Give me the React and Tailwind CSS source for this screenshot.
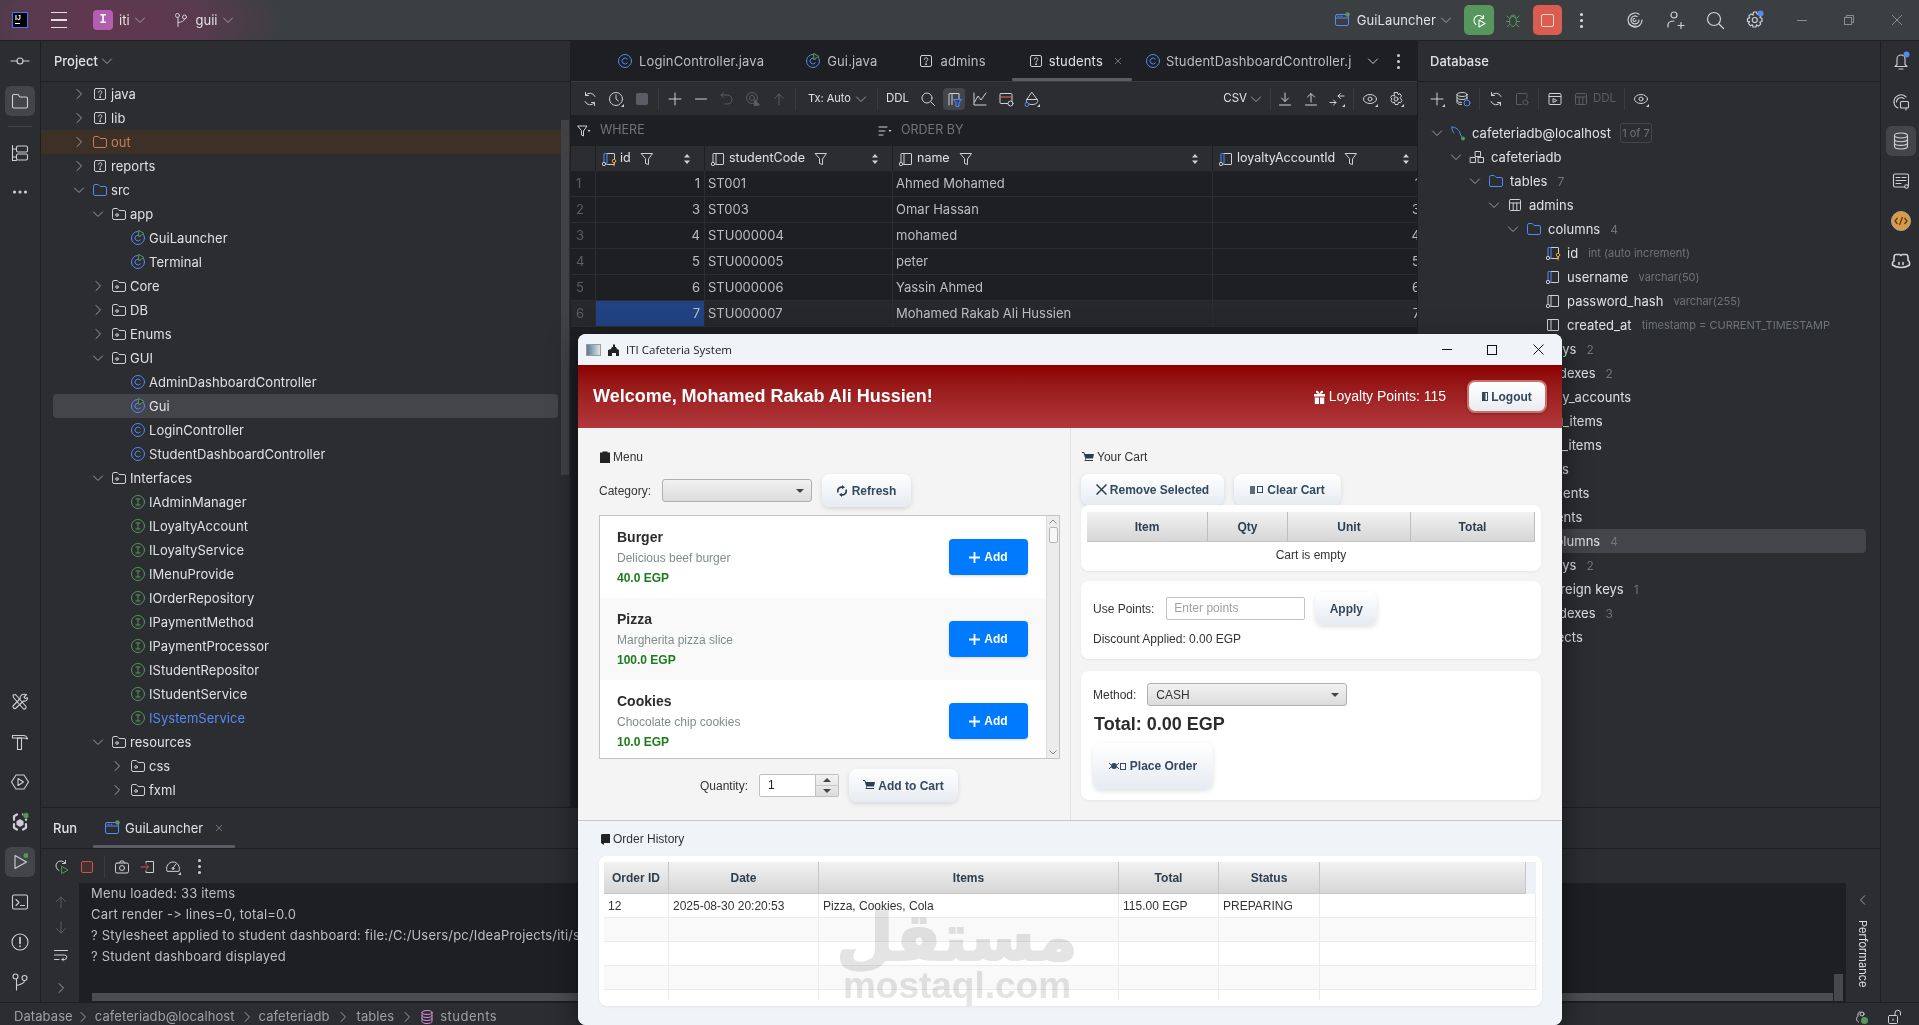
import React from 'react';

const S = ({ s = 16, vb, c = '#ced0d6', w = 1, className = '', children }) => (
  <svg width={s} height={s} viewBox={vb || `0 0 ${s} ${s}`} fill="none" stroke={c} strokeWidth={w} strokeLinecap="round" strokeLinejoin="round" className={`shrink-0 ${className}`}>{children}</svg>
);
const Corner = () => <path d="M16 13v3h-3z" fill="#ced0d6" stroke="none" />;

const ChevR = ({ c = '#9da0a8' }) => <S c={c}><path d="M6 3.5 10.5 8 6 12.5" /></S>;
const ChevD = ({ c = '#9da0a8' }) => <S c={c}><path d="M3.5 6 8 10.5 12.5 6" /></S>;
const folderD = 'M1.5 4A1.5 1.5 0 0 1 3 2.5h3.2l2 2H13A1.5 1.5 0 0 1 14.5 6v6a1.5 1.5 0 0 1-1.5 1.5H3A1.5 1.5 0 0 1 1.5 12z';
const Folder = ({ c = '#548af7' }) => <S c={c}><path d={folderD} /></S>;
const Pkg = () => <S><path d={folderD} /><circle cx="6" cy="9" r="1.3" /></S>;
const Unknown = () => <S><rect x="2.5" y="2.5" width="11" height="11" rx="1.5" /><path d="M6.4 6.3A1.7 1.7 0 1 1 9 7.8c-.6.4-1 .8-1 1.4" /><circle cx="8" cy="11.2" r=".5" fill="#ced0d6" /></S>;
const ClassI = ({ run }) => (
  <S c="#548af7"><circle cx="8" cy="8" r="6.5" /><path d="M10.3 6a3 3 0 1 0 0 4" />{run && <path d="M9 .5 14 3.5 9 6.5z" fill="#2b2d30" stroke="#57965c" />}</S>
);
const Iface = () => <S c="#57965c"><circle cx="8" cy="8" r="6.5" /><path d="M6 5h4M6 11h4M8 5v6" /></S>;
const Table = ({ c = '#ced0d6' }) => <S c={c}><rect x="2.5" y="2.5" width="11" height="11" rx="1" /><path d="M2.5 6h11M6.2 6v7.5M9.8 6v7.5" /></S>;
const Schema = () => <S><rect x="6.5" y="2.5" width="5" height="5" /><rect x="1.5" y="8.5" width="5" height="5" /><rect x="9.5" y="8.5" width="5" height="5" /><path d="M9 7.5v1" /></S>;
const Dolphin = () => <S c="#548af7"><path d="M2 2c4 0 7 3 8 6s1.500 4 3 5" /><path d="M2 2c-.500 3 1 5 2 6" /><circle cx="13" cy="13.500" r="2" fill="#57965c" stroke="none" /></S>;
const Col = ({ c = '#ced0d6', k }) => (
  <S><path d="M6 2.500h7a.5.5 0 0 1 .5.5v10a.5.5 0 0 1-.5.5H6" /><path d="M3 12V3a.5.5 0 0 1 .500-.5H6v11" stroke={c} /><circle cx="3" cy="13" r="1.700" fill="#2b2d30" />{k && <g stroke="#e0a33e"><circle cx="13" cy="10" r="1.700" fill="#2b2d30" /><path d="M13 11.700V15" /></g>}</S>
);
const Plain = () => <S><rect x="2.500" y="2.500" width="11" height="11" rx=".5" /><path d="M6 2.500v11" /></S>;
const Run = () => <S c="#548af7"><rect x="1.500" y="2.500" width="13" height="11" rx="1.500" /><path d="M1.500 6h13" /><path d="M4 4.300h1M7 4.300h1" /><circle cx="13.500" cy="2.500" r="2.300" fill="#57965c" stroke="none" /></S>;

const TreeRow = ({ d, base = 30, gap = 3, chev, icon, text, tc = '#dfe1e5', cnt, meta, badge, bg = '' }) => (
  <div className={`h-6 flex items-center whitespace-nowrap ${bg}`} style={{ paddingLeft: base + d * 19 }}>
    <span className="w-4 mr-[5px] shrink-0">{chev === 'r' ? <ChevR /> : chev === 'd' ? <ChevD /> : null}</span>
    {icon}
    <span className="pt-px tracking-[0.04px]" style={{ marginLeft: gap, color: tc }}>{text}</span>
    {cnt != null && <span className="ml-[10px] pt-px text-[12px] text-[#6f737a]">{cnt}</span>}
    {meta && <span className="ml-[10px] pt-px text-[11px] text-[#6f737a]">{meta}</span>}
    {badge && <span className="ml-[9px] h-[20px] w-[32px] border border-[#43454a] rounded-[3px] text-[11px] text-[#6f737a] flex items-center justify-center">{badge}</span>}
  </div>
);

const projectRows = [
  [0, 'r', <Unknown />, 'java'], [0, 'r', <Unknown />, 'lib'], [0, 'r', <Folder c="#c77d55" />, 'out', '#c77d55', 'bg-[#3d3026]'],
  [0, 'r', <Unknown />, 'reports'], [0, 'd', <Folder />, 'src'], [1, 'd', <Pkg />, 'app'],
  [2, '', <ClassI run />, 'GuiLauncher'], [2, '', <ClassI run />, 'Terminal'], [1, 'r', <Pkg />, 'Core'], [1, 'r', <Pkg />, 'DB'], [1, 'r', <Pkg />, 'Enums'],
  [1, 'd', <Pkg />, 'GUI'], [2, '', <ClassI />, 'AdminDashboardController'], [2, '', <ClassI run />, 'Gui', '#dfe1e5', 'sel'], [2, '', <ClassI />, 'LoginController'], [2, '', <ClassI />, 'StudentDashboardController'],
  [1, 'd', <Pkg />, 'Interfaces'], [2, '', <Iface />, 'IAdminManager'], [2, '', <Iface />, 'ILoyaltyAccount'], [2, '', <Iface />, 'ILoyaltyService'], [2, '', <Iface />, 'IMenuProvide'], [2, '', <Iface />, 'IOrderRepository'],
  [2, '', <Iface />, 'IPaymentMethod'], [2, '', <Iface />, 'IPaymentProcessor'], [2, '', <Iface />, 'IStudentRepositor'], [2, '', <Iface />, 'IStudentService'], [2, '', <Iface />, 'ISystemService', '#548af7'],
  [1, 'd', <Pkg />, 'resources'], [2, 'r', <Pkg />, 'css'], [2, 'r', <Pkg />, 'fxml'],
];

const StripeBtn = ({ active, children }) => (
  <div className={`w-[30px] h-[30px] rounded-[6px] flex items-center justify-center ${active ? 'bg-[#43454a]' : ''}`}>{children}</div>
);

const I20 = ({ children, c = '#ced0d6' }) => <S s={20} c={c} w={1.1}>{children}</S>;
const GreenDot = ({ cx = 16, cy = 4 }) => <circle cx={cx} cy={cy} r="3" fill="#57965c" stroke="#2b2d30" strokeWidth=".6" />;

const LeftStripe = () => (
  <div className="w-[41px] shrink-0 border-r border-[#1e1f22] flex flex-col items-center justify-between">
    <div className="flex flex-col items-center">
      <div className="h-[40px] flex items-center"><I20><circle cx="10" cy="10" r="3" /><path d="M1 10h6M13 10h6" /></I20></div>
      <div className="mt-[5px]"><StripeBtn active><I20><path d="M2.500 5A1.500 1.500 0 0 1 4 3.500h4l2 2.500h6A1.500 1.500 0 0 1 17.500 7.500v8a1.500 1.500 0 0 1-1.500 1.500H4A1.500 1.500 0 0 1 2.500 15.500z" /></I20></StripeBtn></div>
      <div className="w-[24px] h-px bg-[#43454a] my-[10px]" />
      <div className="h-[31px] flex items-center"><I20><rect x="6.500" y="3" width="11" height="6" rx="1.500" /><rect x="6.500" y="11" width="11" height="6" rx="1.500" /><path d="M2.500 2.500v15M2.500 6h4M2.500 14h4M2.500 17.500h4" /></I20></div>
      <div className="h-[40px] flex items-center mt-[4px]"><I20><circle cx="4.500" cy="10" r="1" fill="#ced0d6" /><circle cx="10" cy="10" r="1" fill="#ced0d6" /><circle cx="15.500" cy="10" r="1" fill="#ced0d6" /></I20></div>
    </div>
    <div className="flex flex-col items-center gap-[10px] mb-[5px]">
      <StripeBtn><I20><path d="M3 3 5.500 2.500 16 14.500a2 2 0 0 1-2.500 2.500L3.500 5.500z" /><path d="M16.500 2.500 14 5l1 1.500 2.500-.8c.3 2-1.500 4-4 3.300L5.500 16.500a2 2 0 0 1-2.500-2.500l7.200-7.500C9.500 4 12 2 14.500 2.200z" /></I20></StripeBtn>
      <StripeBtn><I20><path d="M2.500 3.500h11c2 0 3.500 1.500 4 3.500-1.500-.8-3-1-4.500-1H2.500z" /><path d="M7.500 6h4v11.500h-4z" /></I20></StripeBtn>
      <StripeBtn><I20><path d="M6 3h8l4.500 7-4.500 7H6l-4.500-7z" /><path d="M8 6.500 13.500 10 8 13.500z" /></I20></StripeBtn>
      <StripeBtn><I20><path d="M7 2.500 4 4.200v3.600M13 2.500l3 1.700v3.600M4 12v3.800l3 1.700M16 12v3.800l-3 1.700" strokeWidth="2.200" /><path d="M7 9.500l3-1.700 3 1.700v3l-3 1.700-3-1.700z" fill="#ced0d6" /><GreenDot cx="16" cy="3.500" /></I20></StripeBtn>
      <StripeBtn active><I20><path d="M5 3.500 16.500 10 5 16.500z" /><GreenDot cx="16" cy="3.500" /></I20></StripeBtn>
      <StripeBtn><I20><rect x="2.500" y="3" width="15" height="14" rx="1.500" /><path d="M6 7.500 9 10.500 6 13.500M10.500 13.500h4" /></I20></StripeBtn>
      <StripeBtn><I20><circle cx="10" cy="10" r="8" /><path d="M10 5.500v6M10 14v.3" strokeWidth="1.700" /></I20></StripeBtn>
      <StripeBtn><I20><circle cx="5.500" cy="4.500" r="2.500" /><circle cx="14.500" cy="6" r="2.500" /><path d="M6.500 7v11M14.500 8.500c0 3-3 4-8 5" /></I20></StripeBtn>
    </div>
  </div>
);

const RightStripe = () => (
  <div className="w-[39px] shrink-0 border-l border-[#1e1f22] flex flex-col items-center pt-[4px] pl-[1px]">
    <div className="h-[30px] mt-[1px] flex items-center"><I20><path d="M6 13.500V8a4 4 0 0 1 8 0v5.500l2 2H4z" /><path d="M8 18h4" /><circle cx="15.500" cy="3.500" r="3" fill="#548af7" stroke="none" /></I20></div>
    <div className="h-[30px] mt-[11px] flex items-center"><I20><path d="M3 10a7 7 0 0 1 12-5" /><path d="M5.500 10a4.500 4.500 0 0 1 7.500-3.300" /><path d="M3 10c0 3 1.500 5 4 6" /><rect x="9.500" y="9.500" width="8" height="6.500" rx="1" /><path d="M15 16v2" /></I20></div>
    <div className="mt-[9px]"><StripeBtn active><I20><ellipse cx="10" cy="4.500" rx="6.500" ry="2.500" /><path d="M3.500 4.500v11c0 1.400 3 2.500 6.500 2.500s6.500-1.100 6.500-2.500v-11M3.500 8.200c0 1.400 3 2.500 6.500 2.500s6.500-1.100 6.500-2.500M3.500 11.900c0 1.400 3 2.500 6.500 2.500s6.500-1.100 6.500-2.500" /></I20></StripeBtn></div>
    <div className="h-[30px] mt-[10px] flex items-center"><I20><rect x="2.500" y="3" width="15" height="13" rx="1.500" /><path d="M5 6.500h4M11 6.500h4M5 9.500h10M5 12.500h5" /><circle cx="15.500" cy="15.500" r="1.800" fill="#2b2d30" /></I20></div>
    <div className="h-[30px] mt-[10px] flex items-center"><svg width="20" height="20" viewBox="0 0 20 20" fill="none"><circle cx="10" cy="10" r="9.500" fill="#d89a45" stroke="#a8a8a8" /><path d="M6.500 7 4 10l2.500 3M13.500 7 16 10l-2.500 3M11.500 6 8.500 14" stroke="#5a3c12" strokeWidth="1.300" /></svg></div>
    <div className="h-[30px] mt-[10px] flex items-center"><I20><path d="M5 3.500h3.500a2 2 0 0 1 1.500 1 2 2 0 0 1 1.500-1H15c1.500 0 2 1.500 2 3v3c1 .5 1.500 1 1.500 2v2.500c-2 1.500-5 2.500-8.500 2.500s-6.500-1-8.500-2.500V12c0-1 .500-1.500 1.500-2V6.500c0-1.500.500-3 2-3z" strokeWidth="1.600" /><path d="M8 11.500v2M12 11.500v2" strokeWidth="1.600" /></I20></div>
  </div>
);

const TitleBar = () => (
  <div className="h-[41px] shrink-0 border-b border-[#1e1f22] flex items-center text-[#dfe1e5] text-[13px] bg-[radial-gradient(ellipse_170px_60px_at_110px_20px,#62364f_0%,#583a4f_55%,#3c3f41_100%)] bg-[#3c3f41]">
    <div className="ml-[12px] w-[16px] h-[16px] bg-black border border-[#2f80ff] text-white text-[7px] font-bold leading-[9px] pl-[2px] shrink-0 font-['Liberation_Sans']">IJ<div className="w-[5px] h-px bg-white mt-[1px]" /></div>
    <div className="ml-[23px] w-[16px] flex flex-col gap-[6px]"><div className="h-[1.500px] bg-[#dfe1e5]" /><div className="h-[1.500px] bg-[#dfe1e5]" /><div className="h-[1.500px] bg-[#dfe1e5]" /></div>
    <div className="ml-[26px] w-[20px] h-[20px] rounded-[4px] bg-[#b25fb0] flex items-center justify-center text-white text-[12px] font-bold font-['Liberation_Mono']">I</div>
    <span className="ml-[6px] pt-px">iti</span>
    <span className="ml-[2px]"><ChevD /></span>
    <span className="ml-[25px]"><S><circle cx="4.500" cy="3.500" r="2" /><circle cx="11.500" cy="5" r="2" /><path d="M5 5.500v9M11.500 7c0 2-2.500 3-6.500 3.500" /></S></span>
    <span className="ml-[7px] pt-px">guii</span>
    <span className="ml-[2px]"><ChevD /></span>
    <div className="ml-auto flex items-center">
      <Run />
      <span className="ml-[7px] pt-px tracking-[0.1px]">GuiLauncher</span>
      <span className="ml-[2px]"><ChevD /></span>
      <div className="ml-[10px] w-[30px] h-[30px] rounded-[5px] bg-[#57965c] flex items-center justify-center"><S c="#fff" w={1.100}><path d="M12.500 3.500v3h-3" /><path d="M12.300 6A5 5 0 1 0 5 12.500" /><path d="M8 8 14 11.500 8 15z" /></S></div>
      <span className="ml-[11px]"><S c="#57965c" s={16}><ellipse cx="8" cy="9.500" rx="3.500" ry="5" /><path d="M5.500 5.500a2.500 2.500 0 0 1 5 0M2 4l2.500 2.500M14 4l-2.500 2.500M1.500 9.500h3M11.500 9.500h3M2 15l2.500-2.500M14 15l-2.500-2.500" /></S></span>
      <div className="ml-[12px] w-[29px] h-[30px] rounded-[5px] bg-[#db5c50] flex items-center justify-center"><div className="w-[13px] h-[13px] border-[1.500px] border-[#f5d5cf] rounded-[2px]" /></div>
      <span className="ml-[11px] w-[16px] flex flex-col items-center gap-[3px]"><i className="w-[3px] h-[3px] rounded-full bg-[#dfe1e5]" /><i className="w-[3px] h-[3px] rounded-full bg-[#dfe1e5]" /><i className="w-[3px] h-[3px] rounded-full bg-[#dfe1e5]" /></span>
      <span className="ml-[36px]"><S s={20} w={1.200}><path d="M17 10a7 7 0 1 1-3-5.700" /><path d="M14 10a4 4 0 1 1-2-3.500" /><path d="M4 14c2 2 5 2.500 7 2" /><path d="M11 10a1.500 1.500 0 1 1-1.500-1.500" /></S></span>
      <span className="ml-[20px]"><S s={20} w={1.200}><circle cx="9" cy="5" r="3" /><path d="M3 17v-2c0-2.500 2.500-4 6-4" /><path d="M13 15.500h6M16 12.500v6" /></S></span>
      <span className="ml-[20px]"><S s={20} w={1.200}><circle cx="9" cy="9" r="6.500" /><path d="M14 14l4.500 4.500" /></S></span>
      <span className="ml-[20px]"><S s={20} w={1.200}><path d="M8.500 2h3l.6 2.200 2-.9 2 2.300-1.200 1.900L17 8.500v3l-2.200.6.9 2-2.300 2-1.900-1.200-.5 2.100h-3l-.6-2.200-2 .9-2-2.300 1.200-1.900L2.500 11.500v-3l2.200-.6-.9-2 2.300-2 1.900 1.200z" /><circle cx="9.800" cy="10" r="2.500" /><circle cx="15.500" cy="3.500" r="3" fill="#548af7" stroke="none" /></S></span>
      <span className="ml-[32px] mr-[0px] w-[10px] h-px bg-[#8a8c90]" />
      <span className="ml-[37px]"><svg width="10" height="10" viewBox="0 0 10 10" fill="none" stroke="#8a8c90"><rect x=".5" y="2.500" width="7" height="7" /><path d="M2.500 2.500v-2h7v7h-2" /></svg></span>
      <span className="ml-[37px] mr-[16px]"><svg width="12" height="12" viewBox="0 0 12 12" stroke="#8a8c90"><path d="M1 1l10 10M11 1 1 11" /></svg></span>
    </div>
  </div>
);

const Sep = () => <div className="w-px h-[22px] bg-[#393b40] -mx-[2px] shrink-0" />;

const Project = () => (
  <div className="w-[530px] shrink-0 border-r border-[#1e1f22] flex flex-col relative">
    <div className="h-[41px] shrink-0 border-b border-[#1e1f22] flex items-center pl-[13px] text-[#dfe1e5] font-medium"><span className="pt-px">Project</span><span className="ml-[1px]"><ChevD /></span></div>
    <div className="flex-1 overflow-hidden">
      {projectRows.map(([d, ch, ic, t, tc, bg], i) =>
        bg === 'sel' ? (
          <div key={i} className="mx-[12px] w-[505px] rounded-[4px] bg-[#43454a]"><TreeRow d={d} base={18} chev={ch} icon={ic} text={t} /></div>
        ) : (
          <TreeRow key={i} d={d} chev={ch} icon={ic} text={t} tc={tc} bg={bg} />
        ))}
    </div>
    <div className="absolute right-[1px] top-[79px] w-[8px] h-[355px] bg-[#3f4144]" />
  </div>
);

const tabs = [
  ['LoginController.java', <ClassI />, 'ml-[46px]'], ['Gui.java', <ClassI run />, 'ml-[41px]'], ['admins', <Unknown />, 'ml-[41px]'],
];

const gridCols = 'grid-cols-[25px_109px_188px_320px_211px] w-[853px]';

const Editor = () => (
  <div className="w-[846px] shrink-0 flex flex-col bg-[#1e1f22] text-[#bcbec4] overflow-hidden">
    <div className="h-[41px] shrink-0 flex items-center border-b border-[#393b40] relative overflow-hidden tracking-[0.15px]">
      {tabs.map(([t, ic, m]) => <div key={t} className={`flex items-center gap-[6px] ${m}`}>{ic}<span className="pt-px">{t}</span></div>)}
      <div className="flex items-center gap-[5px] ml-[42px] text-[#dfe1e5]"><Unknown /><span className="pt-px">students</span></div>
      <svg className="ml-[11px] shrink-0" width="8" height="8" viewBox="0 0 8 8" stroke="#6f737a"><path d="M1 1l6 6M7 1 1 7" /></svg>
      <div className="flex items-center gap-[5px] ml-[23px] w-[206px] shrink-0 whitespace-nowrap"><ClassI /><span className="pt-px">StudentDashboardController.j</span></div>
      <span className="ml-[14px] shrink-0"><ChevD c="#ced0d6" /></span>
      <span className="ml-[16px] flex flex-col gap-[3px] shrink-0"><i className="w-[3px] h-[3px] rounded-full bg-[#ced0d6]" /><i className="w-[3px] h-[3px] rounded-full bg-[#ced0d6]" /><i className="w-[3px] h-[3px] rounded-full bg-[#ced0d6]" /></span>
      <div className="absolute left-[441px] bottom-0 w-[120px] h-[3px] rounded-[1px] bg-[#5a5d63]" />
    </div>
    <div className="h-[34px] shrink-0 bg-[#2b2d30] border-b border-[#1e1f22] flex items-center gap-[10px] pl-[11px] pr-[13px] text-[12px] text-[#dfe1e5]">
      <S><path d="M13 5.500A5.500 5.500 0 0 0 3.500 4.500M3 10.500A5.500 5.500 0 0 0 12.500 11.500" /><path d="M3.500 1.500v3h3M12.500 14.500v-3h-3" /></S>
      <S><circle cx="8" cy="8" r="6.500" /><path d="M8 4v4l2.500 2" /><Corner /></S>
      <div className="w-4 h-4 flex items-center justify-center"><div className="w-[12px] h-[12px] rounded-[2px] bg-[#5a5d63]" /></div>
      <Sep />
      <S><path d="M8 2v12M2 8h12" /></S>
      <S><path d="M2.500 8h11" /></S>
      <S c="#5a5d63"><path d="M4.500 1.500 2 4l2.500 2.500M2 4h6.500a4.500 4.500 0 0 1 0 9H6" /></S>
      <S c="#5a5d63"><circle cx="7" cy="7" r="5.500" /><circle cx="7" cy="7" r="2.500" /><path d="M10 9 14.500 14 9.500 14.500z" fill="#5a5d63" /></S>
      <S c="#5a5d63"><path d="M8 14V3M3.500 7.500 8 3l4.500 4.500" /></S>
      <Sep />
      <span className="ml-[4px] whitespace-nowrap w-[42px] text-[11px]">Tx: Auto</span>
      <span className="-ml-[7px]"><ChevD /></span>
      <Sep />
      <span className="text-[11.500px]">DDL</span>
      <span className="ml-[1px]"><S><circle cx="7" cy="7" r="5" /><path d="M11 11l3.500 3.500" /></S></span>
      <div className="-mx-[3px] w-[22px] h-[22px] rounded-[4px] bg-[#43454a] flex items-center justify-center"><S><path d="M3 14V3a.5.5 0 0 1 .5-.5H13v6" /><path d="M6 2.500v11" /><path d="M7.500 8.500h8L13 12v3.500l-3 0V12z" fill="#2b4a80" stroke="#548af7" /></S></div>
      <S><path d="M2 2v12h12" /><path d="M2.500 11 6 5l3 4 5-7" /></S>
      <S><rect x="2" y="2.500" width="12" height="10" rx="1" /><path d="M2 6h12" stroke="#e66" /><circle cx="12.500" cy="12.500" r="2.500" fill="#2b2d30" /></S>
      <S><path d="M8 1.500 13.500 9c.500 1.500 0 4.500-5.500 4.500S2 10.500 2.500 9z" /><path d="M3 8.500h10" stroke="#ced0d6" /><circle cx="3" cy="13.500" r="2" stroke="#548af7" fill="#2b2d30" /><Corner /></S>
      <span className="ml-auto text-[11.500px]">CSV</span>
      <span className="-ml-[9px]"><ChevD /></span>
      <div className="w-px h-[22px] bg-[#393b40] -mx-[4px]" />
      <S><path d="M8 2v8M4.500 7 8 10.500 11.500 7M2.500 14h11" /></S>
      <S><path d="M8 11V3M4.500 6 8 2.500 11.500 6M2.500 14h11" /></S>
      <S><path d="M1 11.500h6M4.500 9 7 11.500 4.500 14M15 5H9M11.500 2.500 9 5l2.500 2.500" /><Corner /></S>
      <Sep />
      <S><ellipse cx="8" cy="8" rx="6.500" ry="4.500" /><circle cx="8" cy="8" r="2" /><Corner /></S>
      <S><path d="M6.500 1.500h3l.5 2 2-.8 1.500 2.300-1.300 1.500L13 8l1 1.500-1.500 2.300-2-.7-.5 2.400h-3l-.5-2.400-2 .7L3 9.500 4 8 2.700 6.500 4.200 4.200l2 .8z" /><circle cx="8" cy="8" r="2" /><Corner /></S>
    </div>
    <div className="h-[30px] shrink-0 border-b border-[#1e1f22] flex items-center pl-[5px] text-[#6f737a] text-[12.500px]">
      <S><path d="M2 3h9L7.500 8v5l-2-1V8z" /><path d="M11.500 7h3L13 9z" fill="#ced0d6" stroke="none" /></S>
      <span className="ml-[8px] w-[277px]">WHERE</span>
      <S><path d="M2 4h8M2 8h6M2 12h4" /><path d="M11.500 7h3L13 9z" fill="#ced0d6" stroke="none" /></S>
      <span className="ml-[8px]">ORDER BY</span>
    </div>
    <div className={`grid ${gridCols} h-[25px] shrink-0 bg-[#2b2d30] text-[#dfe1e5] text-[12.500px]`}>
      <div className="border-r border-[#1e1f22]" />
      {[['id', <Col c="#548af7" k />], ['studentCode', <Col />], ['name', <Col />], ['loyaltyAccountId', <Col c="#548af7" />]].map(([t, ic]) => (
        <div key={t} className="border-r border-[#1e1f22] flex items-center pl-[5px] gap-[3px]">
          {ic}<span>{t}</span>
          <span className="ml-[5px]"><S><path d="M2.500 2.500h11L9.500 8v5.500l-3-1V8z" /></S></span>
          <span className="ml-auto mr-[14px]"><svg width="6" height="10" viewBox="0 0 6 10" fill="#ced0d6"><path d="M3 0 6 3.500H0zM3 10 0 6.500h6z" /></svg></span>
        </div>
      ))}
    </div>
    {[['1', 'ST001', 'Ahmed Mohamed', '1'], ['3', 'ST003', 'Omar Hassan', '3'], ['4', 'STU000004', 'mohamed', '4'], ['5', 'STU000005', 'peter', '5'], ['6', 'STU000006', 'Yassin Ahmed', '6'], ['7', 'STU000007', 'Mohamed Rakab Ali Hussien', '7']].map((r, i) => (
      <div key={i} className={`grid ${gridCols} h-[26px] shrink-0 border-b border-[#2b2d30] text-[#bcbec4] items-stretch ${i === 5 ? 'bg-[#26282b]' : ''}`}>
        <div className="flex items-center pl-[5px] text-[#5a5d63] border-r border-[#2b2d30]">{i + 1}</div>
        <div className={`flex items-center justify-end pr-[4px] border-r border-[#2b2d30] ${i === 5 ? 'bg-[#214283]' : ''}`}>{r[0]}</div>
        <div className="flex items-center pl-[3px] border-r border-[#2b2d30]">{r[1]}</div>
        <div className="flex items-center pl-[3px] border-r border-[#2b2d30]">{r[2]}</div>
        <div className="flex items-center justify-end pr-[4px]">{r[3]}</div>
      </div>
    ))}
  </div>
);

const dbRows = [
  [0, 'd', <Dolphin />, 'cafeteriadb@localhost', { badge: '1 of 7' }], [1, 'd', <Schema />, 'cafeteriadb'], [2, 'd', <Folder />, 'tables', { cnt: 7 }], [3, 'd', <Table />, 'admins'],
  [4, 'd', <Folder />, 'columns', { cnt: 4 }], [5, '', <Col c="#548af7" k />, 'id', { meta: 'int (auto increment)' }], [5, '', <Col c="#548af7" />, 'username', { meta: 'varchar(50)' }],
  [5, '', <Col />, 'password_hash', { meta: 'varchar(255)' }], [5, '', <Plain />, 'created_at', { meta: 'timestamp = CURRENT_TIMESTAMP' }],
  [4, 'r', <Folder />, 'keys', { cnt: 2 }], [4, 'r', <Folder />, 'indexes', { cnt: 2 }], [3, 'r', <Table />, 'loyalty_accounts'], [3, 'r', <Table />, 'menu_items'], [3, 'r', <Table />, 'order_items'],
  [3, 'r', <Table />, 'orders'], [3, 'r', <Table />, 'payments'], [3, 'd', <Table />, 'students'], [4, 'r', <Folder />, 'columns', { cnt: 4, sel: true }], [4, 'r', <Folder />, 'keys', { cnt: 2 }],
  [4, 'r', <Folder />, 'foreign keys', { cnt: 1 }], [4, 'r', <Folder />, 'indexes', { cnt: 3 }], [1, 'r', <Folder />, 'Server Objects'],
];

const Database = () => (
  <div className="flex-1 min-w-0 border-l border-[#1e1f22] flex flex-col text-[#dfe1e5]">
    <div className="h-[41px] shrink-0 border-b border-[#1e1f22] flex items-center pl-[12px] font-medium"><span className="pt-px">Database</span></div>
    <div className="h-[34px] shrink-0 flex items-center gap-[10px] pl-[11px] text-[12px] text-[#5a5d63]">
      <S><path d="M8 2v12M2 8h12" /><Corner /></S>
      <S><ellipse cx="7" cy="3.500" rx="5" ry="2" /><path d="M2 3.500v8c0 1.100 2.200 2 4.500 2M12 3.500V8M2 6.500c0 1.100 2.200 2 5 2s5-.9 5-2M2 9.500c0 1.100 2 2 4.500 2" /><circle cx="12" cy="12" r="3" stroke="#548af7" /></S>
      <Sep />
      <S><path d="M13 5.500A5.500 5.500 0 0 0 3.500 4.500M3 10.500A5.500 5.500 0 0 0 12.500 11.500" /><path d="M3.500 1.500v3h3M12.500 14.500v-3h-3" /></S>
      <S c="#5a5d63"><path d="M13 7V3.500a1 1 0 0 0-1-1H3.500a1 1 0 0 0-1 1v10h5" /><circle cx="11.500" cy="11.500" r="2.500" /></S>
      <Sep />
      <S><rect x="2" y="2.500" width="12" height="11" rx="1" /><path d="M2 5.500h12M6 8v3.500L9.500 9.700z" /></S>
      <Table c="#5a5d63" />
      <span className="-ml-[6px] text-[11.500px]">DDL</span>
      <Sep />
      <S><ellipse cx="8" cy="8" rx="6.500" ry="4.500" /><circle cx="8" cy="8" r="2" /><Corner /></S>
    </div>
    <div className="mt-[5px] pr-[14px] flex-1">
      {dbRows.map(([d, ch, ic, t, o = {}], i) => (
        <div key={i} className={o.sel ? 'rounded-[4px] bg-[#43454a]' : ''}>
          <TreeRow d={d} base={11} gap={6} chev={ch} icon={ic} text={t} cnt={o.cnt} meta={o.meta} badge={o.badge} />
        </div>
      ))}
    </div>
  </div>
);

const RunPanel = () => (
  <div className="h-[195px] shrink-0 border-t border-[#1e1f22] flex flex-col relative">
    <div className="h-[41px] shrink-0 border-b border-[#1e1f22] flex items-center pl-[12px] relative">
      <span className="text-[#dfe1e5] font-medium pt-px">Run</span>
      <span className="ml-[27px]"><Run /></span>
      <span className="ml-[5px] text-[#dfe1e5] pt-px">GuiLauncher</span>
      <svg className="ml-[12px]" width="8" height="8" viewBox="0 0 8 8" stroke="#6f737a"><path d="M1 1l6 6M7 1 1 7" /></svg>
      <div className="absolute left-[52px] bottom-0 w-[142px] h-[3px] bg-[#5a5d63] rounded-[1px]" />
    </div>
    <div className="h-[34px] shrink-0 flex items-center pl-[13px] gap-[9px] pt-[1px]">
      <S><path d="M11.500 1.500v3h-3M11 4A5 5 0 1 0 5 11.500" /><path d="M8 7.500 14 11 8 14.500z" stroke="#57965c" /></S>
      <S c="#c75450"><rect x="2.500" y="2.500" width="11" height="11" rx="1.500" fill="#43302f" /></S>
      <div className="w-px h-[22px] bg-[#393b40]" />
      <S><rect x="1.500" y="4" width="13" height="10" rx="1.500" /><circle cx="8" cy="9" r="2.500" /><path d="M5.500 4 6.500 2h3l1 2" /></S>
      <span className="ml-[1px]"><S><path d="M6 4V2.500h7.500v11H6V12" /><path d="M1 8h7M6 5.500 8.500 8 6 10.500" stroke="#c75450" /></S></span>
      <S><path d="M2 12a6.500 6.500 0 1 1 12 0z" /><path d="M8 9l3-4" /><circle cx="8" cy="9.500" r="1" /><Corner /></S>
      <span className="ml-[1px] w-4 flex flex-col items-center gap-[3px]"><i className="w-[3px] h-[3px] rounded-full bg-[#ced0d6]" /><i className="w-[3px] h-[3px] rounded-full bg-[#ced0d6]" /><i className="w-[3px] h-[3px] rounded-full bg-[#ced0d6]" /></span>
    </div>
    <div className="flex-1 flex min-h-0">
      <div className="w-[38px] shrink-0 flex flex-col items-center pl-[1px]">
        <span className="mt-[11px]"><S c="#5a5d63"><path d="M8 14V3M3.500 7.500 8 3l4.500 4.500" /></S></span>
        <span className="mt-[10px]"><S c="#5a5d63"><path d="M8 2v11M3.500 8.500 8 13l4.500-4.500" /></S></span>
        <span className="mt-[11px]"><S><path d="M1.500 3.500h13M1.500 8h10a2 2 0 0 1 0 4.500H9M10.500 11 9 12.500l1.500 1.500M1.500 12.500H6" /></S></span>
        <span className="mt-[17px]"><ChevR /></span>
      </div>
      <div className="flex-1 bg-[#1e1f22] flex flex-col min-w-0 relative text-[#bcbec4] text-[13px] tracking-[0.18px] [font-feature-settings:'calt'_0]">
        <div className="flex-1 pl-[12px] leading-[21px] whitespace-nowrap overflow-hidden">
          <div>Menu loaded: 33 items</div>
          <div>Cart render -&gt; lines=0, total=0.0</div>
          <div>? Stylesheet applied to student dashboard: file:/C:/Users/pc/IdeaProjects/iti/src</div>
          <div>? Student dashboard displayed</div>
        </div>
        <div className="h-[8px] mb-[1px] ml-[13px] mr-[12px] bg-[#4b4d50]" />
        <div className="absolute right-[2px] bottom-[1px] w-[9px] h-[27px] bg-[#46484b]" />
      </div>
      <div className="w-[35px] shrink-0 border-l border-[#1e1f22] flex flex-col items-center text-[#dfe1e5] text-[11px]">
        <span className="mt-[9px]"><svg width="16" height="16" viewBox="0 0 16 16" fill="none" stroke="#9da0a8"><path d="M10 3.500 5.500 8 10 12.500" /></svg></span>
        <span className="mt-[12px] [writing-mode:vertical-rl]">Performance</span>
      </div>
    </div>
  </div>
);

const StatusBar = () => (
  <div className="h-[23px] shrink-0 border-t border-[#1e1f22] flex items-center pl-[14px] pr-[16px] pt-[5px] text-[#9da0a8] relative tracking-[0.08px]">
    <span>Database</span><span className="ml-[2px]"><ChevR /></span>
    <span className="ml-[4px]">cafeteriadb@localhost</span><span className="ml-[4px]"><ChevR /></span>
    <span className="ml-[4px]">cafeteriadb</span><span className="ml-[5px]"><ChevR /></span>
    <span className="ml-[6px]">tables</span><span className="ml-[5px]"><ChevR /></span>
    <span className="ml-[4px]"><S><ellipse cx="8" cy="3.500" rx="5" ry="2" stroke="#d88fd8" /><path d="M3 3.500v9c0 1.100 2.200 2 5 2s5-.9 5-2v-9M3 6.500c0 1.100 2.200 2 5 2s5-.9 5-2M3 9.500c0 1.100 2.200 2 5 2s5-.9 5-2" stroke="#d88fd8" /></S></span>
    <span className="ml-[5px] tracking-[0.5px]">students</span>
    <span className="ml-auto"><S><path d="M6 2.500a4 4 0 0 0-2 5c-2 1-2 4 .500 5.500" /><circle cx="8" cy="5" r="2" /><circle cx="10.500" cy="11.500" r="3.500" fill="#57965c" stroke="none" /></S></span>
    <span className="ml-[17px]"><S><rect x="1.500" y="6.500" width="9" height="8" rx="1" /><path d="M8 6.500V4a2.700 2.700 0 0 1 5.500 0v2" /><path d="M6 10v1.500" /></S></span>
  </div>
);

const AR = "font-['Liberation_Sans',Arial,sans-serif]";
const jfxBtn = 'rounded-[8px] bg-gradient-to-b from-white to-[#e6ebf2] shadow-[0_2px_5px_rgba(0,0,0,0.12)] font-bold text-[#34495e] text-[12px] flex items-center justify-center';
const jfxSelect = 'border border-[#b0b0b0] rounded-[3px] bg-gradient-to-b from-[#f2f2f2] to-[#dcdcdc] flex items-center';

const Tofu = () => <i className="inline-block w-[6px] h-[7px] border border-[#34495e]" />;
const Caret = () => <svg className="ml-auto mr-[7px]" width="8" height="4" viewBox="0 0 8 4" fill="#444"><path d="M0 0h8L4 4z" /></svg>;
const Cart = ({ c = '#2c3e50' }) => <svg width="12" height="11" viewBox="0 0 12 11" fill={c} className="shrink-0"><path d="M0 0h2l1 2h9l-1 4.500H4L3.500 8H11v1H2.500l.8-2.500L1.500 1H0z" /><path d="M4 3h7v2.500H4z" /></svg>;

const MenuItem = ({ n, d, p, alt }) => (
  <div className={`h-[82px] flex items-center pl-[17px] pr-[18px] ${alt ? 'bg-[#f9f9f9]' : 'bg-white'}`}>
    <div className="flex-1 flex flex-col">
      <div className="font-bold text-[14px] text-[#2c2c2c] leading-[16px] h-[16px]">{n}</div>
      <div className="text-[12px] text-[#7f8c8d] leading-[14px] mt-[6px]">{d}</div>
      <div className="font-bold text-[12px] text-[#1c7c1c] leading-[14px] mt-[6px]">{p}</div>
    </div>
    <div className="w-[79px] h-[36px] rounded-[4px] bg-[#007bff] text-white font-bold text-[12px] flex items-center justify-center gap-[4px] shadow-[0_1px_3px_rgba(0,0,0,0.15)]">
      <svg width="11" height="11" viewBox="0 0 11 11" stroke="#fff" strokeWidth="1.800"><path d="M5.500 0v11M0 5.500h11" /></svg>Add
    </div>
  </div>
);

const ThGrad = 'bg-gradient-to-b from-[#f2f2f2] to-[#d6d6d6]';

const Modal = () => (
  <div className={`absolute left-[578px] top-[334px] w-[984px] h-[691px] rounded-[8px] overflow-hidden flex flex-col shadow-[0_8px_28px_rgba(0,0,0,0.5)] bg-[#f4f4f4] text-[#333] text-[12px] ${AR}`}>
    <div className="h-[31px] shrink-0 bg-[#f0f4f9] flex items-center">
      <div className="ml-[8px] w-[15px] h-[12px] border border-[#9a9a9a] bg-gradient-to-r from-[#5a7c90] to-[#dfe6ea]" />
      <svg className="ml-[7px]" width="12" height="12" viewBox="0 0 12 12" fill="#222"><path d="M0 12V6l3-1 1-2h1V1l1-1 1 1v2h1l1 2 2 1v6H8V9H4v3z" /></svg>
      <span className="ml-[6px] text-[#1a1a1a] font-['Open_Sans',sans-serif] text-[11.500px]">ITI Cafeteria System</span>
      <div className="ml-auto flex items-center">
        <div className="w-[10px] h-px bg-[#111]" />
        <div className="ml-[35px] w-[10px] h-[10px] border border-[#111]" />
        <svg className="ml-[36px] mr-[18px]" width="11" height="11" viewBox="0 0 11 11" stroke="#111"><path d="M.5.5l10 10M10.500.5l-10 10" /></svg>
      </div>
    </div>
    <div className="h-[63px] shrink-0 bg-gradient-to-b from-[#8b0000] to-[#b3383c] flex items-center pl-[15px] pr-[15px] text-white">
      <div className="font-bold text-[18px] tracking-[-0.01px]">Welcome, Mohamed Rakab Ali Hussien!</div>
      <div className="ml-auto flex items-center text-[14px]">
        <svg width="11" height="14" viewBox="0 0 11 14" fill="#fff"><path d="M0 4h11v2.500H0zM.8 7.500h4.200V14H.8zM6 7.500h4.200V14H6z" /><path d="M2 1c1.500-1 3 .5 3.500 3C3.500 4 1.500 3 2 1zM9 1c-1.500-1-3 .5-3.500 3C7.500 4 9.500 3 9 1z" /></svg>
        <span className="ml-[4px]">Loyalty Points: 115</span>
      </div>
      <div className="ml-[21px] w-[80px] h-[33px] rounded-[8px] border-2 border-[#c9716a] bg-gradient-to-b from-white to-[#e8ecf2] shadow-[0_1px_3px_rgba(0,0,0,0.25)] text-[#34495e] font-bold text-[12px] flex items-center justify-center gap-[3px]">
        <svg width="6" height="9" viewBox="0 0 6 9"><path d="M0 0h6v9H0z" fill="#34495e" /><path d="M3.500 1h1.500v7H3.500z" fill="#fff" /></svg>Logout
      </div>
    </div>
    <div className="h-[393px] shrink-0 flex border-b border-[#c8c8c8]">
      <div className="w-[493px] shrink-0 border-r border-[#e2e2e2] pl-[21px] pr-[10px] pt-[22px] flex flex-col">
        <div className="h-[14px] flex items-center gap-[3px] pl-[1px]">
          <svg width="10" height="12" viewBox="0 0 10 12" fill="#222"><path d="M0 1.500h2.500V.5h5v1H10V12H0z" /></svg>Menu
        </div>
        <div className="flex items-center mt-[10px] h-[33px]">
          <span>Category:</span>
          <div className={`ml-[11px] w-[150px] h-[23px] ${jfxSelect}`}><Caret /></div>
          <div className={`ml-[10px] w-[89px] h-[33px] gap-[5px] ${jfxBtn}`}>
            <svg width="10" height="12" viewBox="0 0 10 12" fill="none" stroke="#2c3e50" strokeWidth="1.700"><path d="M1 7.500a4 4 0 0 1 5.500-5M9 4.500a4 4 0 0 1-5.500 5" /><path d="M5 0l3 2.500-3 1.500zM5 12 2 9.500 5 8z" fill="#2c3e50" stroke="none" /></svg>Refresh
          </div>
        </div>
        <div className="mt-[8px] h-[244px] border border-[#c4c4c4] flex bg-white overflow-hidden">
          <div className="flex-1 min-w-0">
            <MenuItem n="Burger" d="Delicious beef burger" p="40.0 EGP" />
            <MenuItem n="Pizza" d="Margherita pizza slice" p="100.0 EGP" alt />
            <MenuItem n="Cookies" d="Chocolate chip cookies" p="10.0 EGP" />
          </div>
          <div className="w-[13px] shrink-0 bg-[#ececec] border-l border-[#dcdcdc] flex flex-col items-center">
            <svg className="mt-[3px]" width="8" height="5" viewBox="0 0 8 5" fill="none" stroke="#888"><path d="M.5 4.500 4 1l3.500 3.500" /></svg>
            <div className="mt-[3px] w-[9px] h-[16px] rounded-[2px] bg-[#f7f7f7] border border-[#b5b5b5]" />
            <svg className="mt-auto mb-[3px]" width="8" height="5" viewBox="0 0 8 5" fill="none" stroke="#888"><path d="M.5.5 4 4 7.500.5" /></svg>
          </div>
        </div>
        <div className="mt-[10px] h-[33px] flex items-center pl-[101px]">
          <span>Quantity:</span>
          <div className="ml-[11px] w-[80px] h-[23px] border border-[#c0c0c0] rounded-[2px] bg-white flex">
            <span className="flex-1 pl-[8px] leading-[21px] text-[#222]">1</span>
            <div className="w-[23px] border-l border-[#c0c0c0] flex flex-col bg-gradient-to-b from-[#f2f2f2] to-[#dcdcdc]">
              <div className="flex-1 flex items-center justify-center border-b border-[#c8c8c8]"><svg width="8" height="4" viewBox="0 0 8 4" fill="#444"><path d="M4 0l4 4H0z" /></svg></div>
              <div className="flex-1 flex items-center justify-center"><svg width="8" height="4" viewBox="0 0 8 4" fill="#444"><path d="M0 0h8L4 4z" /></svg></div>
            </div>
          </div>
          <div className={`ml-[10px] w-[109px] h-[33px] gap-[3px] ${jfxBtn}`}><Cart />Add to Cart</div>
        </div>
      </div>
      <div className="flex-1 min-w-0 pl-[10px] pr-[21px] pt-[22px] flex flex-col">
        <div className="h-[14px] flex items-center gap-[3px] pl-[1px]"><Cart />Your Cart</div>
        <div className="flex items-start mt-[10px] h-[31px] gap-[10px]">
          <div className={`w-[143px] h-[31px] gap-[3px] ${jfxBtn}`}><svg width="11" height="11" viewBox="0 0 11 11" stroke="#2c3e50" strokeWidth="1.500"><path d="M.5.5l10 10M10.500.5l-10 10" /></svg>Remove Selected</div>
          <div className={`w-[107px] h-[31px] gap-[4px] ${jfxBtn}`}>
            <span className="flex items-center gap-[2px]"><i className="inline-block w-[5px] h-[8px] bg-[#5a6b7d]" /><Tofu /></span>Clear Cart
          </div>
        </div>
        <div className="h-[66px] shrink-0 rounded-[8px] bg-white shadow-[0_1px_3px_rgba(0,0,0,0.06)] px-[6px] pt-[7px] relative">
          <div className={`grid grid-cols-[121px_80px_123px_124px] h-[30px] font-bold text-[#2c3e50] border-b border-[#c4c4c4] ${ThGrad}`}>
            {['Item', 'Qty', 'Unit', 'Total'].map((t) => <div key={t} className="flex items-center justify-center border-r border-[#bdbdbd]">{t}</div>)}
          </div>
          <div className="text-center leading-[24px] text-[#333] mt-[1px]">Cart is empty</div>
        </div>
        <div className="mt-[10px] h-[78px] shrink-0 rounded-[8px] bg-white shadow-[0_1px_3px_rgba(0,0,0,0.06)] pl-[12px] pt-[11px]">
          <div className="flex items-center h-[33px]">
            <span>Use Points:</span>
            <div className="ml-[12px] w-[139px] h-[23px] border border-[#c4c4c4] rounded-[2px] pl-[7px] leading-[21px] text-[#a0a0a0]">Enter points</div>
            <div className={`ml-[10px] w-[62px] h-[33px] ${jfxBtn}`}>Apply</div>
          </div>
          <div className="mt-[7px] leading-[14px]">Discount Applied: 0.00 EGP</div>
        </div>
        <div className="mt-[12px] h-[129px] shrink-0 rounded-[8px] bg-white shadow-[0_1px_3px_rgba(0,0,0,0.06)] pl-[12px] pt-[12px]">
          <div className="flex items-center h-[23px]">
            <span>Method:</span>
            <div className={`ml-[11px] w-[200px] h-[23px] pl-[8px] ${jfxSelect}`}><span>CASH</span><Caret /></div>
          </div>
          <div className="mt-[8px] pl-[1px] h-[20px] leading-[20px] font-bold text-[18px] text-[#2c2c2c]">Total: 0.00 EGP</div>
          <div className={`mt-[9px] w-[120px] h-[46px] gap-[4px] ${jfxBtn}`}>
            <span className="flex items-center gap-[1px]"><svg width="10" height="8" viewBox="0 0 10 8" fill="#34495e"><circle cx="5" cy="4" r="3" /><path d="M0 1l2 2M10 1 8 3M0 7l2-2M10 7 8 5" stroke="#34495e" /></svg><Tofu /></span>Place Order
          </div>
        </div>
      </div>
    </div>
    <div className="flex-1 bg-[#f0f4f8] pl-[21px] pr-[20px] pt-[11px] relative">
      <div className="h-[14px] flex items-center gap-[2px] pl-[2px]">
        <svg width="10" height="11" viewBox="0 0 10 11" fill="#222"><path d="M1 0h8v9H3v2L0 9V1z" /></svg>Order History
      </div>
      <div className="mt-[10px] h-[150px] rounded-[8px] bg-white shadow-[0_1px_3px_rgba(0,0,0,0.06)] px-[5px] pt-[6px]">
        <div className="grid grid-cols-[65px_150px_300px_100px_101px_206px_10px] h-[32px] font-bold text-[#2c3e50]">
          {['Order ID', 'Date', 'Items', 'Total', 'Status', ''].map((t, i) => <div key={i} className={`flex items-center justify-center border-b border-r border-[#c6c6c6] pt-px ${ThGrad}`}>{t}</div>)}
          <div className="bg-[#eef1f7]" />
        </div>
        {[['12', '2025-08-30 20:20:53', 'Pizza, Cookies, Cola', '115.00 EGP', 'PREPARING', ''], ['', '', '', '', '', ''], ['', '', '', '', '', ''], ['', '', '', '', '', '']].map((r, i) => (
          <div key={i} className={`grid grid-cols-[65px_150px_300px_100px_101px_216px] h-[24px] border-b border-[#ececec] text-[#333] ${i % 2 ? 'bg-[#f9f9f9]' : 'bg-white'}`}>
            {r.map((t, j) => <div key={j} className="border-r border-[#ececec] pl-[4px] leading-[24px] whitespace-nowrap">{t}</div>)}
          </div>
        ))}
        <div className="grid grid-cols-[65px_150px_300px_100px_101px_216px] h-[10px]">
          {[0, 1, 2, 3, 4, 5].map((k) => <div key={k} className="border-r border-[#ececec] last:border-r-0" />)}
        </div>
      </div>
      <div className="absolute left-[264px] top-[87px] w-[230px] flex flex-col items-center pointer-events-none mix-blend-multiply text-[#e4e4e4]">
        <div className="font-['DejaVu_Sans',sans-serif] font-bold text-[66px] leading-[60px] h-[60px] [-webkit-text-stroke:2px_#e4e4e4]">مستقل</div>
        <div className="font-bold text-[37px] leading-[36px] font-['Liberation_Sans',sans-serif]">mostaql.com</div>
      </div>
    </div>
  </div>
);

export default function App() {
  return (
    <div className="w-[1919px] h-[1025px] relative overflow-hidden flex flex-col bg-[#2b2d30] text-[13px] text-[#dfe1e5] font-['Inter',sans-serif]">
      <TitleBar />
      <div className="flex-1 flex min-h-0">
        <LeftStripe />
        <div className="flex-1 min-w-0 flex flex-col">
          <div className="flex-1 flex min-h-0">
            <Project />
            <Editor />
            <Database />
          </div>
          <RunPanel />
        </div>
        <RightStripe />
      </div>
      <StatusBar />
      <Modal />
    </div>
  );
}
